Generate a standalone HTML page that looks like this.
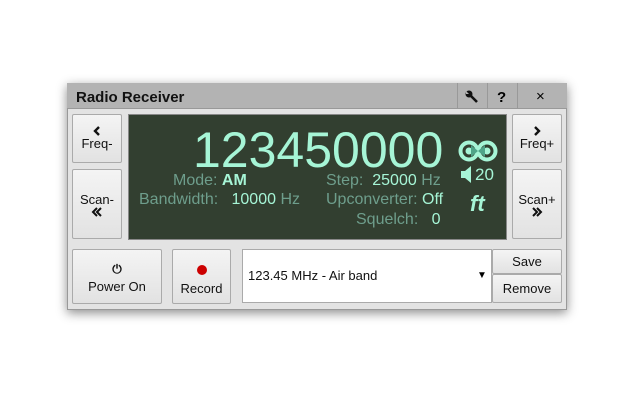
<!DOCTYPE html>
<html><head><style>
body{margin:0;width:640px;height:400px;background:#fff;font-family:"Liberation Sans",sans-serif;position:relative;overflow:hidden}
.a{position:absolute}
.win{left:67px;top:83px;width:500px;height:227px;background:#e3e3e3;box-shadow:0 3px 10px rgba(0,0,0,.45);border:1px solid #999;box-sizing:border-box}
.tb{left:67px;top:83px;width:500px;height:26px;background:#b3b3b3;border-bottom:1px solid #999;box-sizing:border-box}
.btn{position:absolute;background:linear-gradient(#f4f4f4,#e2e2e2);border:1px solid #aaa;border-radius:2px;box-sizing:border-box;text-align:center;font-size:13px;color:#111}
.disp{left:128px;top:114px;width:379px;height:126px;background:#323f30;border:1px solid #888;box-sizing:border-box}
.l{color:#6e9e8c;font-size:16px}
.v{color:#a6f5d6;font-size:16px}
.ch{display:block;margin:0 auto;height:10px}
</style></head><body>
<div class="a win"></div>
<div class="a tb"></div>
<div class="a" style="left:76px;top:89px;font-size:15px;font-weight:bold;color:#111">Radio Receiver</div>
<div class="a" style="left:457px;top:83px;width:1px;height:26px;background:#999"></div>
<div class="a" style="left:487px;top:83px;width:1px;height:26px;background:#999"></div>
<div class="a" style="left:517px;top:83px;width:1px;height:26px;background:#999"></div>
<svg class="a" style="left:464px;top:89px" width="16" height="16" viewBox="0 0 16 16"><path d="M13 13 L7 7" stroke="#111" stroke-width="2.6"/><circle cx="5" cy="5" r="3.5" fill="#111"/><path d="M2 2 L5 5 L2 5Z" fill="#b3b3b3"/></svg>
<div class="a" style="left:497px;top:89px;font-size:15px;font-weight:bold">?</div>
<div class="a" style="left:536px;top:88px;font-size:15px">×</div>

<div class="btn" style="left:72px;top:114px;width:50px;height:49px;padding-top:11px;line-height:15px"><svg class="ch" width="8" viewBox="0 0 8 10"><path d="M6 1 L2 5 L6 9" stroke="#111" stroke-width="2.4" fill="none"/></svg>Freq-</div>
<div class="btn" style="left:72px;top:169px;width:50px;height:70px;padding-top:22px;line-height:15px">Scan-<svg class="ch" width="12" viewBox="0 0 12 10"><path d="M6 1 L2 5 L6 9 M10 1 L6 5 L10 9" stroke="#111" stroke-width="2" fill="none"/></svg></div>
<div class="btn" style="left:512px;top:114px;width:50px;height:49px;padding-top:11px;line-height:15px"><svg class="ch" width="8" viewBox="0 0 8 10"><path d="M2 1 L6 5 L2 9" stroke="#111" stroke-width="2.4" fill="none"/></svg>Freq+</div>
<div class="btn" style="left:512px;top:169px;width:50px;height:70px;padding-top:22px;line-height:15px">Scan+<svg class="ch" width="12" viewBox="0 0 12 10"><path d="M2 1 L6 5 L2 9 M6 1 L10 5 L6 9" stroke="#111" stroke-width="2" fill="none"/></svg></div>

<div class="a disp"></div>
<div class="a" style="left:193px;top:122px;font-size:50px;color:#a6f5d6;line-height:56px">123450000</div>
<div class="a l" style="left:173px;top:172px">Mode: <span class="v" style="font-weight:bold">AM</span></div>
<div class="a l" style="left:139px;top:191px">Bandwidth: &nbsp; <span class="v">10000</span> Hz</div>
<div class="a l" style="left:326px;top:172px">Step: &nbsp;<span class="v">25000</span> Hz</div>
<div class="a l" style="left:326px;top:191px">Upconverter: <span class="v">Off</span></div>
<div class="a l" style="left:356px;top:211px">Squelch: &nbsp; <span class="v">0</span></div>
<svg class="a" style="left:458px;top:139px" width="40" height="24" viewBox="0 0 40 24"><circle cx="11" cy="12" r="8.5" fill="none" stroke="#a6f5d6" stroke-width="4"/><circle cx="29" cy="12" r="8.5" fill="none" stroke="#a6f5d6" stroke-width="4"/><circle cx="11" cy="12" r="3.5" fill="#a6f5d6"/><circle cx="29" cy="12" r="3.5" fill="#a6f5d6"/><path d="M13 6 L20 12 L13 18Z M27 6 L20 12 L27 18Z" fill="#4fa488"/></svg>
<svg class="a" style="left:461px;top:166px" width="12" height="17"><path d="M0 5 H4 L10 0 V17 L4 12 H0Z" fill="#a6f5d6"/></svg>
<div class="a v" style="left:475px;top:165px;font-size:17px">20</div>
<div class="a v" style="left:470px;top:191px;font-size:22px;font-style:italic;font-weight:bold">ft</div>

<div class="btn" style="left:72px;top:249px;width:90px;height:55px;padding-top:10px;line-height:18px"><span style="font-size:12px;font-weight:bold">&#x23FB;</span><br>Power On</div>
<div class="btn" style="left:172px;top:249px;width:59px;height:55px;padding-top:12px;line-height:18px"><span style="display:inline-block;width:10px;height:10px;border-radius:5px;background:#c00"></span><br>Record</div>
<div class="a" style="left:242px;top:249px;width:250px;height:54px;background:#fff;border:1px solid #aaa;box-sizing:border-box"></div>
<div class="a" style="left:248px;top:268px;font-size:13px;color:#111">123.45 MHz - Air band</div>
<div class="a" style="left:477px;top:270px;font-size:10px">▼</div>
<div class="btn" style="left:492px;top:249px;width:70px;height:25px;line-height:23px">Save</div>
<div class="btn" style="left:492px;top:274px;width:70px;height:29px;line-height:27px">Remove</div>
</body></html>
